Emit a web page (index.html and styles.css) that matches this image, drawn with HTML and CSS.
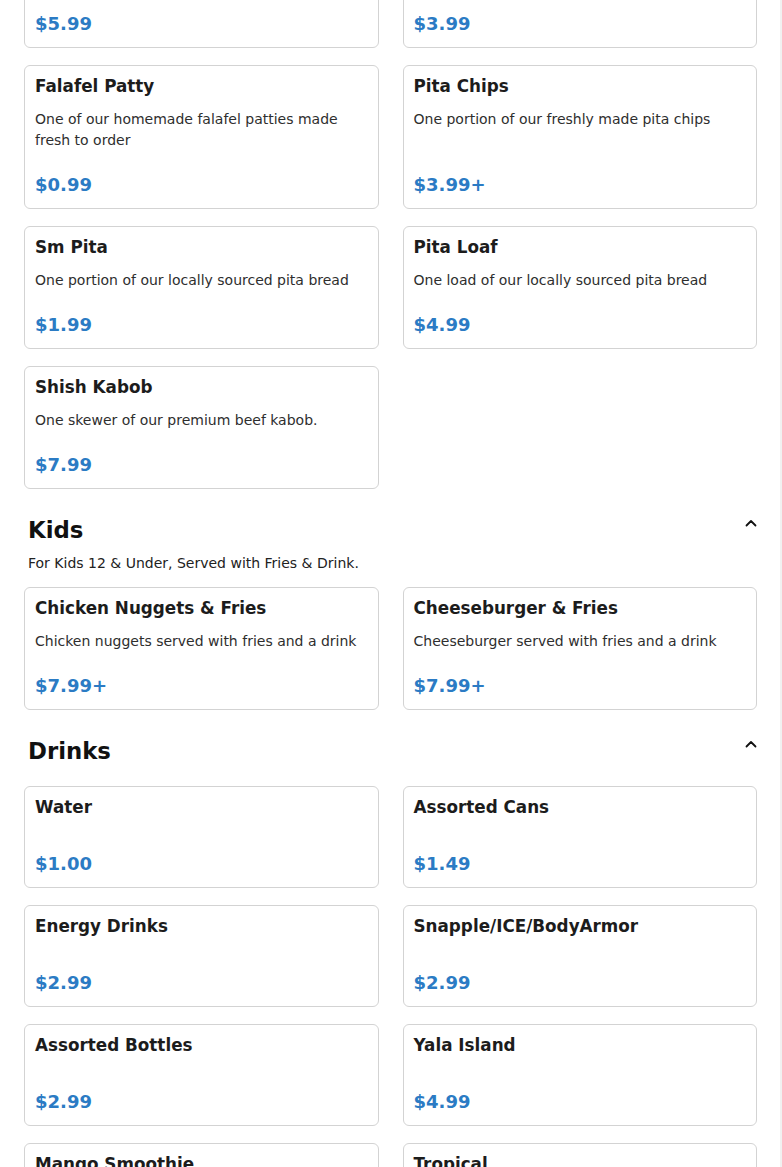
FILE: index.html
```html
<!DOCTYPE html>
<html lang="en">
<head>
<meta charset="utf-8">
<title>Menu</title>
<link rel="stylesheet" href="styles.css">
</head>
<body>
<main class="menu">
  <section class="section section-first">
    <div class="grid">
      <article class="card">
        <h3 class="card-title">Hummus</h3>
        <p class="card-desc">A side of our creamy homemade hummus</p>
        <div class="card-price">$5.99</div>
      </article>
      <article class="card">
        <h3 class="card-title">Fries</h3>
        <p class="card-desc">A side of our crispy seasoned fries</p>
        <div class="card-price">$3.99</div>
      </article>
      <article class="card">
        <h3 class="card-title">Falafel Patty</h3>
        <p class="card-desc">One of our homemade falafel patties made fresh to order</p>
        <div class="card-price">$0.99</div>
      </article>
      <article class="card">
        <h3 class="card-title">Pita Chips</h3>
        <p class="card-desc">One portion of our freshly made pita chips</p>
        <div class="card-price">$3.99+</div>
      </article>
      <article class="card">
        <h3 class="card-title">Sm Pita</h3>
        <p class="card-desc">One portion of our locally sourced pita bread</p>
        <div class="card-price">$1.99</div>
      </article>
      <article class="card">
        <h3 class="card-title">Pita Loaf</h3>
        <p class="card-desc">One load of our locally sourced pita bread</p>
        <div class="card-price">$4.99</div>
      </article>
      <article class="card">
        <h3 class="card-title">Shish Kabob</h3>
        <p class="card-desc">One skewer of our premium beef kabob.</p>
        <div class="card-price">$7.99</div>
      </article>
    </div>
  </section>

  <section class="section">
    <header class="section-head">
      <div class="section-row">
        <h2 class="section-title">Kids</h2>
        <button class="toggle" aria-label="Collapse">
          <svg width="12" height="8" viewBox="0 0 12 8"><polyline points="1.5,6.5 6,2 10.5,6.5" fill="none" stroke="#111" stroke-width="1.8" stroke-linecap="round" stroke-linejoin="round"/></svg>
        </button>
      </div>
      <p class="section-sub">For Kids 12 &amp; Under, Served with Fries &amp; Drink.</p>
    </header>
    <div class="grid">
      <article class="card">
        <h3 class="card-title">Chicken Nuggets &amp; Fries</h3>
        <p class="card-desc">Chicken nuggets served with fries and a drink</p>
        <div class="card-price">$7.99+</div>
      </article>
      <article class="card">
        <h3 class="card-title">Cheeseburger &amp; Fries</h3>
        <p class="card-desc">Cheeseburger served with fries and a drink</p>
        <div class="card-price">$7.99+</div>
      </article>
    </div>
  </section>

  <section class="section">
    <header class="section-head">
      <div class="section-row">
        <h2 class="section-title">Drinks</h2>
        <button class="toggle" aria-label="Collapse">
          <svg width="12" height="8" viewBox="0 0 12 8"><polyline points="1.5,6.5 6,2 10.5,6.5" fill="none" stroke="#111" stroke-width="1.8" stroke-linecap="round" stroke-linejoin="round"/></svg>
        </button>
      </div>
    </header>
    <div class="grid">
      <article class="card">
        <h3 class="card-title">Water</h3>
        <div class="card-price">$1.00</div>
      </article>
      <article class="card">
        <h3 class="card-title">Assorted Cans</h3>
        <div class="card-price">$1.49</div>
      </article>
      <article class="card">
        <h3 class="card-title">Energy Drinks</h3>
        <div class="card-price">$2.99</div>
      </article>
      <article class="card">
        <h3 class="card-title">Snapple/ICE/BodyArmor</h3>
        <div class="card-price">$2.99</div>
      </article>
      <article class="card">
        <h3 class="card-title">Assorted Bottles</h3>
        <div class="card-price">$2.99</div>
      </article>
      <article class="card">
        <h3 class="card-title">Yala Island</h3>
        <div class="card-price">$4.99</div>
      </article>
      <article class="card">
        <h3 class="card-title">Mango Smoothie</h3>
        <div class="card-price">$5.99</div>
      </article>
      <article class="card">
        <h3 class="card-title">Tropical</h3>
        <div class="card-price">$5.99</div>
      </article>
    </div>
  </section>
</main>
</body>
</html>
```

FILE: styles.css
```css
html {
  overflow: hidden;
  background: #ffffff;
}

body {
  margin: 0;
  font-family: "DejaVu Sans", "Liberation Sans", sans-serif;
  color: #1c1c1c;
  background: #ffffff;
}

.menu {
  box-sizing: border-box;
  width: 782px;
  padding: 0 23px 40px 24px;
  border-right: 2px solid #f1f1f1;
  margin-top: -75.5px;
}

.section {
  margin-top: 27px;
}

.section-first {
  margin-top: 0;
}

.grid {
  display: grid;
  grid-template-columns: 1fr 1fr;
  column-gap: 24px;
  row-gap: 17px;
}

.card {
  display: flex;
  flex-direction: column;
  background: #ffffff;
  border: 1px solid #d3d3d3;
  border-radius: 6px;
  padding: 10px;
}

.card-title {
  margin: 0 0 13px;
  font-size: 16.8px;
  line-height: 20px;
  font-weight: bold;
  color: #1c1c1c;
}

.card-desc {
  margin: 0;
  font-size: 14px;
  line-height: 21px;
  color: #2e2e2e;
}

.card-price {
  margin-top: auto;
  padding-top: 21px;
  font-size: 18px;
  line-height: 26px;
  font-weight: bold;
  color: #2b7bc4;
}

.section-head {
  display: flex;
  flex-direction: column;
  margin-bottom: 12px;
  padding-left: 4px;
}

.section-row {
  display: flex;
  justify-content: space-between;
  align-items: flex-start;
  margin-bottom: 8px;
}

.section-title {
  margin: 0;
  font-size: 22.8px;
  line-height: 29px;
  font-weight: bold;
  color: #111111;
}

.toggle {
  display: flex;
  padding: 0;
  margin: 3.5px 0 0;
  border: 0;
  background: none;
  cursor: pointer;
}

.section-sub {
  margin: 0 0 1px;
  font-size: 14px;
  line-height: 21px;
  color: #222222;
}
```
